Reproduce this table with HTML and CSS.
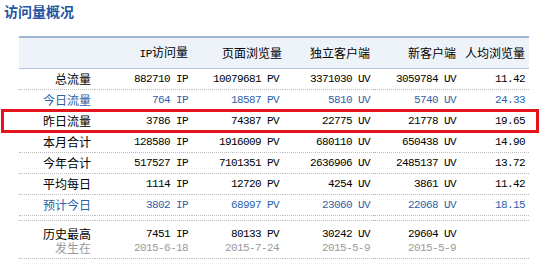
FILE: index.html
```html
<!DOCTYPE html>
<html lang="zh-CN">
<head>
<meta charset="utf-8">
<title>访问量概况</title>
<link rel="stylesheet" href="styles.css">
</head>
<body>
<div class="page">
  <h1 class="title">访问量概况</h1>
  <table class="stats">
    <colgroup>
      <col class="c-label"><col class="c1"><col class="c2"><col class="c3"><col class="c4"><col class="c5">
    </colgroup>
    <thead>
      <tr>
        <th></th>
        <th><span class="mono">IP</span>访问量</th>
        <th class="th2">页面浏览量</th>
        <th>独立客户端</th>
        <th>新客户端</th>
        <th>人均浏览量</th>
      </tr>
    </thead>
    <tbody>
      <tr>
        <td class="label">总流量</td>
        <td class="num">882710 IP</td><td class="num">10079681 PV</td><td class="num">3371030 UV</td><td class="num">3059784 UV</td><td class="num">11.42</td>
      </tr>
      <tr class="blue">
        <td class="label">今日流量</td>
        <td class="num">764 IP</td><td class="num">18587 PV</td><td class="num">5810 UV</td><td class="num">5740 UV</td><td class="num">24.33</td>
      </tr>
      <tr>
        <td class="label">昨日流量</td>
        <td class="num">3786 IP</td><td class="num">74387 PV</td><td class="num">22775 UV</td><td class="num">21778 UV</td><td class="num">19.65</td>
      </tr>
      <tr>
        <td class="label">本月合计</td>
        <td class="num">128580 IP</td><td class="num">1916009 PV</td><td class="num">680110 UV</td><td class="num">650438 UV</td><td class="num">14.90</td>
      </tr>
      <tr>
        <td class="label">今年合计</td>
        <td class="num">517527 IP</td><td class="num">7101351 PV</td><td class="num">2636906 UV</td><td class="num">2485137 UV</td><td class="num">13.72</td>
      </tr>
      <tr>
        <td class="label">平均每日</td>
        <td class="num">1114 IP</td><td class="num">12720 PV</td><td class="num">4254 UV</td><td class="num">3861 UV</td><td class="num">11.42</td>
      </tr>
      <tr class="blue">
        <td class="label">预计今日</td>
        <td class="num">3802 IP</td><td class="num">68997 PV</td><td class="num">23060 UV</td><td class="num">22068 UV</td><td class="num">18.15</td>
      </tr>
      <tr class="spacer">
        <td></td><td></td><td></td><td></td><td></td><td></td>
      </tr>
      <tr class="hist1">
        <td class="label">历史最高</td>
        <td class="num">7451 IP</td><td class="num">80133 PV</td><td class="num">30242 UV</td><td class="num">29604 UV</td><td></td>
      </tr>
      <tr class="hist2 gray">
        <td class="label">发生在</td>
        <td class="num">2015-6-18</td><td class="num">2015-7-24</td><td class="num">2015-5-9</td><td class="num">2015-5-9</td><td></td>
      </tr>
    </tbody>
  </table>
  <div class="highlight"></div>
</div>
</body>
</html>
```

FILE: styles.css
```css
html, body {
  margin: 0;
  padding: 0;
  background: #ffffff;
}

.page {
  position: relative;
  width: 539px;
  height: 261px;
  overflow: hidden;
  font-family: "Noto Sans CJK SC", "Noto Sans", sans-serif;
  font-size: 12px;
  color: #000000;
}

.title {
  margin: 1px 0 0 4px;
  font-size: 14px;
  line-height: 20px;
  font-weight: bold;
  color: #2455a6;
}

.stats {
  margin: 15px 0 0 19px;
  width: 510px;
  table-layout: fixed;
  border-collapse: separate;
  border-spacing: 0;
}

.c-label { width: 76px; }
.c1 { width: 97px; }
.c2 { width: 91px; }
.c3 { width: 91px; }
.c4 { width: 86px; }
.c5 { width: 69px; }

.stats th {
  height: 28px;
  padding: 0 4px 0 0;
  line-height: 28px;
  font-weight: normal;
  text-align: right;
  white-space: nowrap;
  background: #eef2f9;
  border-top: 2px solid #9fb3d3;
  border-bottom: 1px solid #b3c3dd;
}

.stats th.th2 {
  padding-right: 1px;
}

.stats td {
  height: 20px;
  padding: 0 4px 0 0;
  line-height: 20px;
  text-align: right;
  white-space: nowrap;
  border-bottom: 1px dotted #bdbdbd;
}

.mono,
.stats td.num {
  font-family: "Liberation Mono", "DejaVu Sans Mono", monospace;
  font-size: 11px;
  letter-spacing: -0.6px;
}

.stats th .mono {
  letter-spacing: -0.4px;
}

.blue td {
  color: #2d62a8;
}

.stats .spacer td {
  height: 4px;
  line-height: 4px;
}

.stats .hist1 td {
  height: 14px;
  line-height: 14px;
  padding-top: 6px;
  border-bottom: none;
}

.stats .hist2 td {
  height: 14px;
  line-height: 14px;
  padding-bottom: 3px;
}

.gray td {
  color: #9a9a9a;
}

.highlight {
  position: absolute;
  left: 1px;
  top: 109px;
  width: 538px;
  height: 24px;
  box-sizing: border-box;
  border: 3px solid #e3141c;
}
```
